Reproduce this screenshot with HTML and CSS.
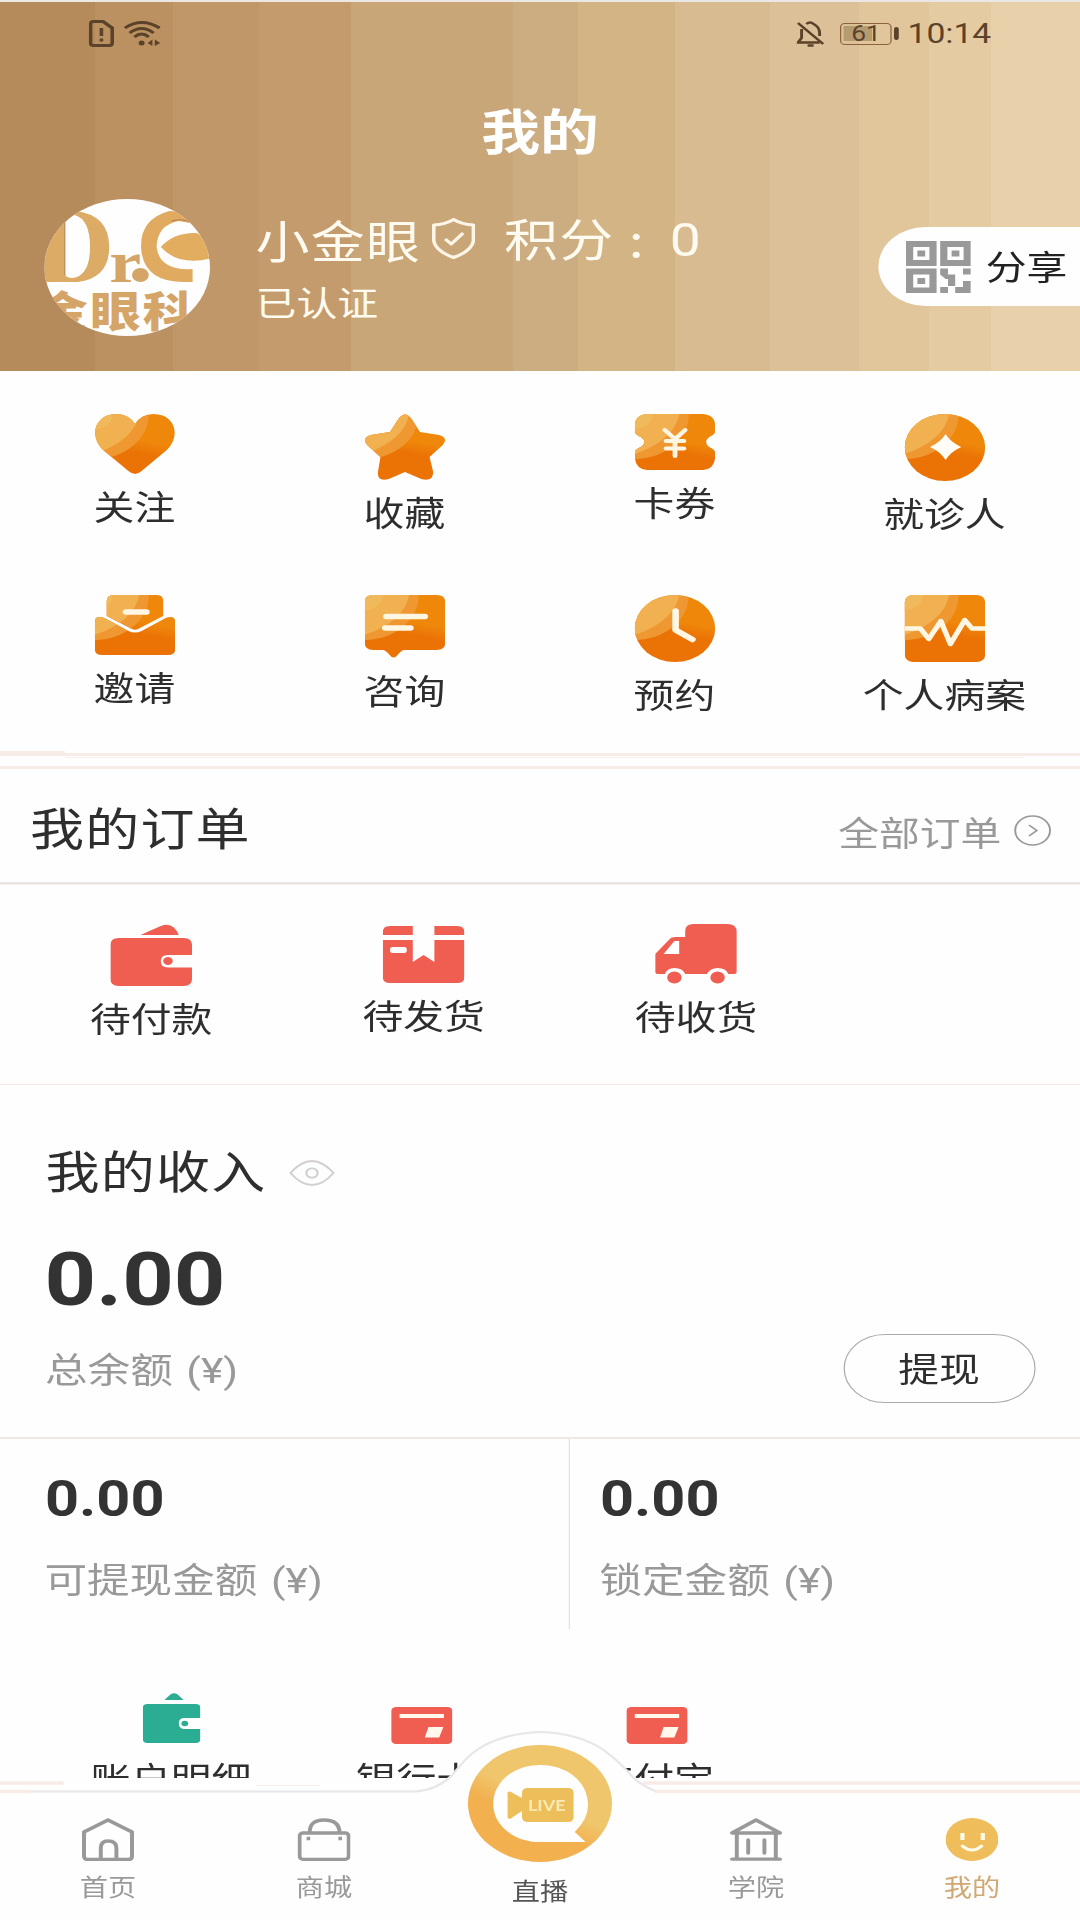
FILE: index.html
```html
<!DOCTYPE html>
<html lang="zh-CN">
<head>
<meta charset="utf-8">
<title>我的</title>
<link rel="stylesheet" href="styles.css">
</head>
<body>
<svg class="defs" width="0" height="0" aria-hidden="true">
  <defs>
    <linearGradient id="amber" gradientUnits="userSpaceOnUse" x1="44" y1="16" x2="36" y2="52">
      <stop offset="0.3" stop-color="#ef880a"/><stop offset="0.65" stop-color="#eb7306"/>
    </linearGradient>
    <linearGradient id="gold" x1="0.7" y1="0.2" x2="0.3" y2="0.9">
      <stop offset="0.4" stop-color="#f0c66c"/><stop offset="0.65" stop-color="#f2b04e"/>
    </linearGradient>
    <g id="shade">
      <rect width="67" height="67" fill="url(#amber)"/>
      <circle r="45" fill="#ef9832"/>
      <path d="M0 0H37Q33 26 0 40Z" fill="#f2b150"/>
      <circle r="15" fill="#f0ba5c"/>
    </g>
    <clipPath id="c-heart"><path d="M33.5 60Q31 60 28 57L7 36C-5 22 0 0 18 0Q28 0 33.5 10Q39 0 49 0C67 0 72 22 60 36L39 57Q36 60 33.5 60Z"/></clipPath>
    <clipPath id="c-star"><path d="M28 5Q33.500-4 39 5L46 18L62 21Q70 24 65 31L54 43L57 58Q57 68 47 65L33.500 58L20 65Q10 68 11 58L13 43L2 31Q-3 24 5 21L21 18Z"/></clipPath>
    <clipPath id="c-ticket"><path d="M10 0H57Q67 1 67 12V18Q66 21 62 23Q57 28 62 33Q66 35 67 38V44Q66 55 57 56H10Q1 55 0 44V38Q1 35 5 33Q11 28 5 23Q1 21 0 18V12Q0 1 10 0Z"/></clipPath>
    <clipPath id="c-round"><circle cx="33.5" cy="33.5" r="33.5"/></clipPath>
    <clipPath id="c-mail"><path d="M16 0H52Q57 0 57 6V21L36 34Q33.500 35.500 31 34L10 21V6Q10 0 16 0ZM8 23L28 36Q33.500 39 39 36L59 23Q67 20 67 27V54Q67 60 61 60H6Q0 60 0 54V27Q0 20 8 23Z"/></clipPath>
    <clipPath id="c-chat"><path d="M7 0H60Q67 0 67 7V48Q67 55 60 55H33Q31 55 28 59Q24 66 20 59Q17 55 15 55H7Q0 55 0 48V7Q0 0 7 0Z"/></clipPath>
    <clipPath id="c-square"><rect width="67" height="67" rx="7"/></clipPath>
  </defs>
</svg>

<div class="app">
  <header class="hero">
    <div class="status">
      <div class="status-left">
        <svg width="21" height="27" viewBox="0 0 21 27" fill="none" stroke="#5a432a" stroke-width="3"><path d="M4 1.500H12L19.500 8V23Q19.500 25.500 17 25.500H4Q1.500 25.500 1.500 23V4Q1.500 1.500 4 1.500Z"/><path d="M10.500 8V16M10.500 18.500V21.500"/></svg>
        <svg width="31" height="27" viewBox="0 0 31 27" fill="none" stroke="#5a432a" stroke-width="2.800"><path d="M1 8Q15 -3 30 8M5 13Q15 4 25 13M9 17Q15 11 21 17"/><circle cx="15" cy="23" r="2.500" fill="#5a432a" stroke="none"/><path d="M24 19.500V26L20 23ZM26 19.500V26L30.500 23Z" fill="#5a432a" stroke="none"/></svg>
      </div>
      <div class="status-right">
        <svg width="23" height="26" viewBox="0 0 23 26" fill="none" stroke="#5a432a" stroke-width="2.400"><path d="M8 3Q11 0 14 3Q19 6 19 12V15M4 8V17L1 21.500H19M1 2L22 23M9 24.500H14"/></svg>
        <div class="battery"><span>61</span></div>
        <span class="clock">10:14</span>
      </div>
    </div>
    <h1 class="title">我的</h1>
    <div class="profile">
      <svg class="avatar" width="138" height="137" viewBox="0 0 138 137">
        <clipPath id="c-avatar"><ellipse cx="69" cy="68.500" rx="69" ry="68.500"/></clipPath>
        <g clip-path="url(#c-avatar)">
          <rect width="138" height="137" fill="#fefefe"/>
          <path fill-rule="evenodd" d="M0 12H26Q54 16 54 48Q54 79 28 83H0ZM17 24V74Q17 79 24 79Q38 76 38 48Q38 20 25 16Q17 17 17 24Z" fill="#dcab66"/>
          <path d="M121 24V16Q112 12 104 12Q80 20 80.500 48Q82 83 116 83H123.500V70Q96 72 93.500 48Q94 26 112 22Z" fill="#e0ab60"/>
          <path d="M97 48Q108 33 127 34L140 44V59Q112 68 97 48Z" fill="#e3ad60"/>
          <path d="M17 22V76M106 22Q114 19 122 23" fill="none" stroke="#b57f4e" stroke-width="0.900"/>
          <text x="54" y="83" class="logo-r">r</text><circle cx="80" cy="76" r="7" fill="#d4a566"/>
          <text x="-6" y="128" class="logo-cn">金眼科</text>
        </g>
      </svg>
      <div class="who">
        <div class="name-row">
          <span>小金眼</span>
          <svg width="36" height="41" viewBox="0 0 36 41" fill="none" stroke="#fdf6e8" stroke-width="3" stroke-linejoin="round"><path d="M18 1.500Q25 6.500 34.500 7V23Q33 33 18 39.500Q3 33 1.500 23V7Q11 6.500 18 1.500ZM11 21L16 26L26 15"/></svg>
          <span class="points">积分<i>:</i><b>0</b></span>
        </div>
        <div class="verified">已认证</div>
      </div>
      <div class="share">
        <svg width="54" height="52" viewBox="0 0 54 52"><path fill="#999" fill-rule="evenodd" d="M0 0H25.500V25H0ZM6 6V19H19.500V6ZM28.500 0H54V25H28.500ZM34.500 6V19H48V6ZM0 27.500H25.500V52H0ZM6 33.500V46.500H19.500V33.500ZM9.500 9.500H16V15.500H9.500ZM38 9.500H44.500V15.500H38ZM9.500 37H16V43H9.500ZM28.500 27.500H35V33.500H41V45H35V38H33L28.500 33.500ZM47.500 27.500H54V33.500H47.500ZM28.500 46H35V52H28.500ZM47.500 40H54V52H41V46H47.500Z"/></svg>
        <span>分享</span>
      </div>
    </div>
  </header>

  <nav class="grid">
    <a class="item"><svg width="67" height="60" viewBox="0 0 67 60"><use href="#shade" clip-path="url(#c-heart)"/></svg><span>关注</span></a>
    <a class="item"><svg width="67" height="66" viewBox="0 0 67 66"><use href="#shade" clip-path="url(#c-star)"/></svg><span>收藏</span></a>
    <a class="item"><svg width="67" height="56" viewBox="0 0 67 56"><use href="#shade" clip-path="url(#c-ticket)"/><path d="M25 16L33.500 25L42 16M33.500 25V42M26 27H41M26 34.500H41" fill="none" stroke="#fff7e4" stroke-width="4" stroke-linecap="round"/></svg><span>卡券</span></a>
    <a class="item"><svg width="67" height="67" viewBox="0 0 67 67"><use href="#shade" clip-path="url(#c-round)"/><path d="M34 20Q38 28 47 33Q38 38 34 46Q30 38 21 33Q30 28 34 20Z" fill="#fffdf5"/></svg><span>就诊人</span></a>
    <a class="item"><svg width="67" height="60" viewBox="0 0 67 60"><use href="#shade" clip-path="url(#c-mail)"/><path d="M26 17H43" stroke="#fff7e4" stroke-width="5.500" stroke-linecap="round"/></svg><span>邀请</span></a>
    <a class="item"><svg width="67" height="63" viewBox="0 0 67 63"><use href="#shade" clip-path="url(#c-chat)"/><path d="M18 21.500H50M17 33H38" stroke="#fff7e4" stroke-width="5.500" stroke-linecap="round"/></svg><span>咨询</span></a>
    <a class="item"><svg width="67" height="67" viewBox="0 0 67 67"><use href="#shade" clip-path="url(#c-round)"/><path d="M34 16V35L48 44.500" fill="none" stroke="#fff7e4" stroke-width="5.500" stroke-linecap="round" stroke-linejoin="round"/></svg><span>预约</span></a>
    <a class="item"><svg width="67" height="67" viewBox="0 0 67 67"><use href="#shade" clip-path="url(#c-square)"/><path d="M0 33.500H13L20 44L30 26L38 49L50 25L56 33.500H67" fill="none" stroke="#fff7e4" stroke-width="4.500" stroke-linejoin="round"/></svg><span>个人病案</span></a>
  </nav>
  <div class="band"></div>

  <section class="orders">
    <div class="orders-head">
      <h2>我的订单</h2>
      <a class="all"><span>全部订单</span><svg width="31" height="31" viewBox="0 0 31 31" fill="none" stroke="#999" stroke-width="1.600"><circle cx="15.500" cy="15.500" r="14.500"/><path d="M12.500 10L19 15.500L12.500 21"/></svg></a>
    </div>
    <div class="orders-list">
      <a class="item"><svg width="68" height="62" viewBox="0 0 68 62" fill="#f05d51"><path d="M25 11L42 2Q52-3 57 11ZM7 14H61Q68 14 68 21V31H48Q42 31 42 37Q42 43.500 48 43.500H68V55Q68 62 61 62H7Q0 62 0 55V21Q0 14 7 14Z"/><circle cx="48" cy="37" r="4"/></svg><span>待付款</span></a>
      <a class="item"><svg width="68" height="57" viewBox="0 0 68 57" fill="#f05d51"><path fill-rule="evenodd" d="M6 0H25V9H0V6Q0 0 6 0ZM43 0H62Q68 0 68 6V9H43ZM0 14H25V36L34 29L43 36V14H68V51Q68 57 62 57H6Q0 57 0 51ZM8 21Q6 21 6 24Q6 27 8 27H18Q20 27 20 24Q20 21 18 21Z"/></svg><span>待发货</span></a>
      <a class="item"><svg width="68" height="60" viewBox="0 0 68 60" fill="#f05d51"><path fill-rule="evenodd" d="M32 0H60Q68 0 68 8V48Q68 50 66 50H61Q59 44 52 44Q46 44 43 50H25Q23 44 16 44Q10 44 8 50H2Q0 50 0 48V30L13 14Q15 13 17 13H25V7Q25 0 32 0ZM16 17L7 30H20V17Z"/><circle cx="16" cy="53.500" r="6"/><circle cx="52" cy="53.500" r="6"/></svg><span>待收货</span></a>
    </div>
  </section>

  <section class="income">
    <div class="income-head"><h2>我的收入</h2><svg width="38" height="26" viewBox="0 0 38 26" fill="none" stroke="#d2cfcd" stroke-width="1.800"><path d="M1 13Q19-11 37 13Q19 37 1 13Z"/><circle cx="19" cy="13" r="4.700"/></svg></div>
    <div class="total">0.00</div>
    <div class="balance"><span class="caption">总余额 (¥)</span><a class="withdraw">提现</a></div>
  </section>

  <section class="split">
    <div class="cell"><strong>0.00</strong><span class="caption">可提现金额 (¥)</span></div>
    <div class="cell"><strong>0.00</strong><span class="caption">锁定金额 (¥)</span></div>
  </section>

  <section class="tools">
    <a class="tool"><svg width="48" height="50" viewBox="0 0 48 50" fill="#2bad93"><path d="M18 7L23 1.500Q26-1 29 1.500L34 7ZM4 11H44Q48 11 48 15V25H35Q30 25 30 30Q30 36 35 36H48V46Q48 50 44 50H4Q0 50 0 46V15Q0 11 4 11Z"/><circle cx="35" cy="30.500" r="2.800"/></svg><span>账户明细</span></a>
    <a class="tool"><svg width="51" height="37" viewBox="0 0 51 37"><rect width="51" height="37" rx="4" fill="#f05d51"/><path d="M7 7H44V11H7ZM31 20H43.500L40 30.500H28Z" fill="#fff6ec"/></svg><span>银行卡</span></a>
    <a class="tool"><svg width="51" height="37" viewBox="0 0 51 37"><rect width="51" height="37" rx="4" fill="#f05d51"/><path d="M7 7H44V11H7ZM31 20H43.500L40 30.500H28Z" fill="#fff6ec"/></svg><span>支付宝</span></a>
  </section>

  <footer class="tabbar">
    <svg class="tabbar-bg" width="900" height="190" viewBox="0 0 900 190">
      <path d="M0 61.500H346Q364 60 376 46L386 32Q407 4 450 2Q482 3 503 20Q516 31 528 48Q537 57 547 61.500H900V190H0Z" fill="#fefefe"/>
      <path d="M0 61.500H346Q364 60 376 46L386 32Q407 4 450 2Q482 3 503 20Q516 31 528 48Q537 57 547 61.500" fill="none" stroke="#e8e6e6" stroke-width="2"/>
      <path d="M0 53H53M0 61.500H26M536 53H900M546 61.500H900" stroke="#f9ebe6" stroke-width="3.500" fill="none"/>
      <path d="M213 55.500H266" stroke="#fbefec"/>
    </svg>
    <a class="tab"><svg width="44" height="43" viewBox="0 0 44 43" fill="none" stroke="#999" stroke-width="3.300" stroke-linejoin="round"><path d="M2 14L22 2L42 14V38Q42 41.500 39 41.500H5Q2 41.500 2 38ZM16 41V30Q16 23 22 23Q29 23 29 30V41"/></svg><span>首页</span></a>
    <a class="tab"><svg width="44" height="43" viewBox="0 0 44 43" fill="none" stroke="#999" stroke-width="3.300"><rect x="1.600" y="15" width="41" height="26.300" rx="3"/><path d="M10 15Q10 2 22 2Q35 2 35 15"/><path d="M7.500 20.500H10.500M34 20.500H37"/></svg><span>商城</span></a>
    <a class="tab live"><svg width="120" height="117" viewBox="0 0 120 117"><ellipse cx="60" cy="58.500" rx="60" ry="58.500" fill="url(#gold)"/><path d="M60 20C83 20 100 37 100 60Q100 74 89 87L98 97H60C38 97 21 80 21 59C21 37 38 20 60 20Z" fill="#fefefe"/><path d="M33 47L35 46.500L45 53V48Q45 43 50 43H83Q88 43 88 48V72Q88 77 83 77H50Q45 77 45 72V66L35 74L33 73Z" fill="#edbf5b"/><text x="50" y="66" class="live-text">LIVE</text></svg><span>直播</span></a>
    <a class="tab"><svg width="44" height="43" viewBox="0 0 44 43" fill="none" stroke="#999" stroke-width="3.300" stroke-linejoin="round" stroke-linecap="round"><path d="M2 15L22 2L42 15ZM6 16V41M38.500 16V41M2 41.200H42M15.500 22V35M29 22V35"/></svg><span>学院</span></a>
    <a class="tab on"><svg width="44" height="43" viewBox="0 0 44 43"><ellipse cx="22" cy="21.500" rx="22" ry="21.500" fill="#efbd5a"/><path d="M14 15V22M31 15V22" stroke="#fffbea" stroke-width="3.500"/><path d="M14 28Q22 36 30 28" stroke="#fffbea" stroke-width="3" fill="none" stroke-linecap="round"/></svg><span>我的</span></a>
  </footer>
</div>
</body>
</html>
```
FILE: styles.css
```css
* { box-sizing: border-box; }
body {
  margin: 0;
  width: 1080px;
  height: 1920px;
  overflow: hidden;
  background: #fefefe;
  font-family: "Noto Sans CJK SC", sans-serif;
  color: #2e2e2e;
}
svg { display: block; flex: none; }
.defs { position: absolute; }
h1, h2 { margin: 0; font-weight: 400; }

/* 900-unit layout drawn on the 1080px wide screen */
.app {
  position: relative;
  display: flex;
  flex-direction: column;
  width: 900px;
  height: 1920px;
  overflow: hidden;
  transform: scaleX(1.2);
  transform-origin: 0 0;
}

.hero {
  flex: none;
  height: 371px;
  border-top: 2px solid #ebe7e5;
  color: #fffbf0;
  background: linear-gradient(90deg,
    #b68b5b 0 8.800%, #bb9161 8.800% 16%, #c09768 16% 24%, #c39b6c 24% 32.500%,
    #c8a677 32.500% 47.500%, #ccac81 47.500% 53.500%, #d3b485 53.500% 62.500%,
    #d8bb91 62.500% 71.300%, #dcc097 71.300% 79.500%, #e1c69c 79.500% 86%,
    #e5cba2 86% 91.800%, #e8d0ab 91.800%);
}
.status {
  display: flex;
  justify-content: space-between;
  align-items: center;
  height: 63px;
  padding: 0 74px;
  color: #5a432a;
  font-family: Roboto, sans-serif;
}
.status-left, .status-right { display: flex; align-items: center; }
.status-left { gap: 8px; }
.battery {
  position: relative;
  width: 43px;
  height: 22px;
  margin: 0 13px 0 13px;
  border: 1.500px solid #8c623c;
  border-radius: 4px;
  background: linear-gradient(90deg, #b79b70 62%, transparent 62%) 2px 2px / 38px 15px no-repeat;
  font-size: 22px;
  line-height: 19px;
  text-align: center;
}
.battery::after {
  content: "";
  position: absolute;
  right: -7px;
  top: 3px;
  width: 4px;
  height: 13px;
  border-radius: 2px;
  background: #5a432a;
}
.clock { font-size: 28px; line-height: 32px; }
.title {
  height: 70px;
  margin-top: 29px;
  text-align: center;
  font-weight: 700;
  font-size: 49px;
  line-height: 70px;
  color: #fff;
}
.profile { display: flex; align-items: flex-start; padding-left: 37px; margin-top: 35px; }
.who { flex: 1; margin: 13px 0 0 38px; }
.name-row { display: flex; align-items: center; height: 56px; font-size: 45px; line-height: 56px; letter-spacing: 1px; }
.name-row svg { margin: -4px 0 0 9px; }
.points { display: flex; margin-left: 24px; }
.points i { font-style: normal; margin: 0 0 0 12px; width: 34px; }
.points b { font: 400 46px/60px Roboto, sans-serif; }
.verified { height: 44px; margin-top: 12px; font-size: 34px; line-height: 44px; }
.share {
  display: flex;
  align-items: center;
  width: 168px;
  height: 79px;
  margin-top: 28px;
  padding-left: 23px;
  gap: 12.500px;
  border-radius: 40px 0 0 40px;
  background: #fefefe;
  color: #222;
  font-size: 34px;
  line-height: 44px;
  white-space: nowrap;
}
.share span { margin-top: -2px; }
.logo-r { font: 700 60px "Liberation Serif", serif; fill: #d4a566; }
.logo-cn { font: 900 42px "Noto Sans CJK SC", sans-serif; letter-spacing: 2px; fill: #d4a566; }

.grid {
  flex: none;
  display: grid;
  grid-template-columns: repeat(4, 225px);
  grid-template-rows: 181px 158px;
  height: 380px;
  padding-top: 42.500px;
}
.item { display: flex; flex-direction: column; align-items: center; font-size: 34px; }
.item span { height: 44px; margin-top: 10px; line-height: 44px; }
.grid .item { margin-left: -1px; }
.grid .item span { margin-top: 10.500px; }

.band {
  flex: none;
  height: 18px;
  background:
    linear-gradient(#f8ece8, #f8ece8) 0 0 / 54px 5px no-repeat,
    linear-gradient(#f8ece8, #f8ece8) 0 2px / 100% 3px no-repeat,
    linear-gradient(#faf0ee, #faf0ee) 54px 6px / 799px 1px no-repeat,
    linear-gradient(#f8ece8, #f8ece8) 0 15px / 100% 3px no-repeat;
}

.orders { flex: none; height: 316px; border-bottom: 1px solid #f8e9e6; }
.orders-head {
  display: flex;
  justify-content: space-between;
  align-items: center;
  height: 115px;
  padding: 3px 24.500px 0 25px;
  border-bottom: 2px solid #e6e4e4;
  box-shadow: 0 1px 0 #fbeeea;
}
h2 { font-size: 45px; line-height: 60px; letter-spacing: 1px; }
.all { display: flex; align-items: center; gap: 10px; margin-top: 9px; color: #999; font-size: 34px; line-height: 44px; }
.all svg { margin-top: -2px; }
.orders-list { display: grid; grid-template-columns: repeat(3, 227px); padding: 40px 0 0 12.500px; }
.orders-list .item:nth-child(2) { padding-top: 2px; }

.income { flex: none; height: 352px; padding: 55px 38px 0 38px; }
.income-head { display: flex; align-items: center; gap: 18.500px; height: 60px; }
.income-head svg { margin-top: 6px; }
.total { margin-top: 38.500px; margin-left: -1px; font: 700 75px/80px Roboto, sans-serif; color: #333; }
.balance { display: flex; justify-content: space-between; align-items: center; height: 69px; margin-top: 15.500px; }
.balance .caption { margin-top: 4px; }
.caption {
  margin-left: -0.500px;
  font-family: Roboto, "Noto Sans CJK SC", sans-serif;
  font-size: 35.500px;
  line-height: 44px;
  word-spacing: 2.500px;
  color: #999;
  white-space: nowrap;
}
.withdraw {
  width: 160px;
  height: 69px;
  margin-right: -0.500px;
  border: 1px solid #aaa;
  border-radius: 35px;
  text-align: center;
  font-size: 34px;
  line-height: 66px;
}

.split { flex: none; display: grid; grid-template-columns: 473.500px 1fr; height: 192px; border-top: 2px solid #f0e8e5; }
.cell { display: flex; flex-direction: column; padding: 30px 0 0 37.500px; }
.cell + .cell { padding-left: 25.500px; border-left: 1px solid #e6dfdc; }
.cell strong { font: 700 49.500px/60px Roboto, sans-serif; color: #333; }
.cell .caption { margin-top: 29.500px; }

.tools { flex: none; display: flex; height: 149px; overflow: hidden; padding: 64px 0 0 43px; }
.tool { display: flex; flex-direction: column; align-items: center; justify-content: flex-start; width: 200px; height: 120px; font-size: 33.500px; }
.tool svg { margin-top: 14px; }
.tool:first-child svg { margin-top: 0; }
.tool span { line-height: 44px; height: 44px; margin-top: 11px; margin-left: -4px; }
.tool:first-child span { margin-top: 12px; margin-left: -1px; }
.tool:nth-child(2) { width: 216px; }
.tool:nth-child(2) span { margin-left: -8px; }
.tool:nth-child(3) { width: 176px; }

.tabbar {
  position: absolute;
  left: 0;
  bottom: 0;
  display: grid;
  grid-template-columns: repeat(5, 180px);
  width: 900px;
  height: 190px;
}
.tabbar-bg { position: absolute; left: 0; top: 0; }
.tab { position: relative; display: flex; flex-direction: column; align-items: center; padding-top: 88px; font-size: 23.500px; color: #999; }
.tab span { line-height: 32px; margin-top: 9px; }
.tab.live { padding-top: 15px; color: #555; }
.tab.live span { margin-top: 12px; }
.tab.on { color: #cfa872; }
.live-text { font: 700 15px Lato, sans-serif; fill: #fbe9b5; }
```
